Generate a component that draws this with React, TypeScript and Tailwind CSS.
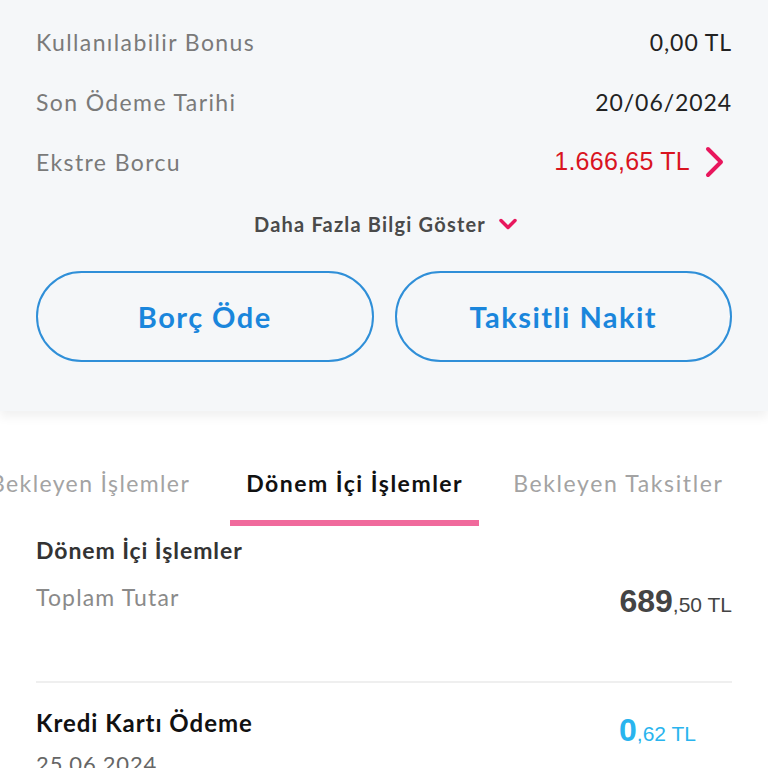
import { ChevronDown } from "lucide-react";

const font = { fontFamily: "Lato, 'Noto Sans', sans-serif" };

function InfoRow({ label, value, red }: { label: string; value: string; red?: boolean }) {
  return (
    <div className="flex items-center justify-between h-[60px]">
      <span className="text-[23px] text-[#7a7a7a] tracking-[0.06em]">{label}</span>
      {red ? (
        <span className="flex items-center gap-[14px]">
          <span className="text-[25px] text-[#d9141f] font-['Liberation_Sans',sans-serif] tracking-[0.01em]">{value}</span>
          <svg width="22" height="34" viewBox="0 0 22 34" className="mr-[6px]">
            <path d="M4 4 L17 17 L4 30" fill="none" stroke="#e8175d" strokeWidth="4" strokeLinecap="round" strokeLinejoin="round" />
          </svg>
        </span>
      ) : (
        <span className="text-[23px] text-[#222] tracking-[0.04em]">{value}</span>
      )}
    </div>
  );
}

export default function App() {
  return (
    <div className="w-[768px] h-[768px] overflow-hidden bg-white" style={font}>
      <div className="bg-[#f5f7f9] px-9 pt-[12px] pb-[49px] shadow-[0_6px_10px_rgba(0,0,0,0.06)] relative z-10">
        <InfoRow label="Kullanılabilir Bonus" value="0,00 TL" />
        <InfoRow label="Son Ödeme Tarihi" value="20/06/2024" />
        <InfoRow label="Ekstre Borcu" value="1.666,65 TL" red />
        <div className="flex items-center justify-center gap-2 h-[64px] pl-2">
          <span className="text-[20px] font-bold text-[#4a4a4a] tracking-[0.06em]">Daha Fazla Bilgi Göster</span>
          <ChevronDown className="w-7 h-7 text-[#e8175d]" strokeWidth={3} />
        </div>
        <div className="grid grid-cols-2 gap-[21px] mt-[15px]">
          <button className="h-[91px] rounded-full border-2 border-[#2f8fd8] text-[#1a86dc] text-[29px] font-bold tracking-[0.05em]">
            Borç Öde
          </button>
          <button className="h-[91px] rounded-full border-2 border-[#2f8fd8] text-[#1a86dc] text-[29px] font-bold tracking-[0.05em]">
            Taksitli Nakit
          </button>
        </div>
      </div>

      <div className="flex items-end h-[115px] overflow-hidden ml-[-26px]">
        <div className="px-4 pb-[20px] border-b-[6px] border-transparent">
          <span className="text-[23px] text-[#a3a3a3] whitespace-nowrap tracking-[0.06em]">Bekleyen İşlemler</span>
        </div>
        <div className="ml-[24px] px-4 pb-[20px] border-b-[6px] border-[#f06a9c]">
          <span className="text-[23px] text-[#111] font-bold whitespace-nowrap tracking-[0.065em]">Dönem İçi İşlemler</span>
        </div>
        <div className="ml-[18px] px-4 pb-[20px] border-b-[6px] border-transparent">
          <span className="text-[23px] text-[#a3a3a3] whitespace-nowrap tracking-[0.07em]">Bekleyen Taksitler</span>
        </div>
      </div>

      <div className="px-9">
        <div className="pt-[7px] text-[23px] font-bold text-[#333] tracking-[0.04em]">Dönem İçi İşlemler</div>
        <div className="flex justify-between items-start mt-[12px]">
          <span className="text-[23px] text-[#8a8a8a] tracking-[0.05em]">Toplam Tutar</span>
          <span className="font-['Liberation_Sans',sans-serif] text-[#444] mt-[-3px]">
            <span className="text-[32px] font-bold">689</span>
            <span className="text-[21px]">,50 TL</span>
          </span>
        </div>
        <div className="h-[2px] bg-[#efefef] mt-[56px]" />
        <div className="flex justify-between items-start pt-[22px]">
          <div>
            <div className="text-[24px] font-bold text-[#111] tracking-[0.04em]">Kredi Kartı Ödeme</div>
            <div className="text-[22px] text-[#666] mt-[6px] tracking-[0.04em]">25.06.2024</div>
          </div>
          <span className="font-['Liberation_Sans',sans-serif] text-[#29b4ee] mr-[36px] mt-[1px]">
            <span className="text-[32px] font-bold">0</span>
            <span className="text-[21px]">,62 TL</span>
          </span>
        </div>
      </div>
    </div>
  );
}
